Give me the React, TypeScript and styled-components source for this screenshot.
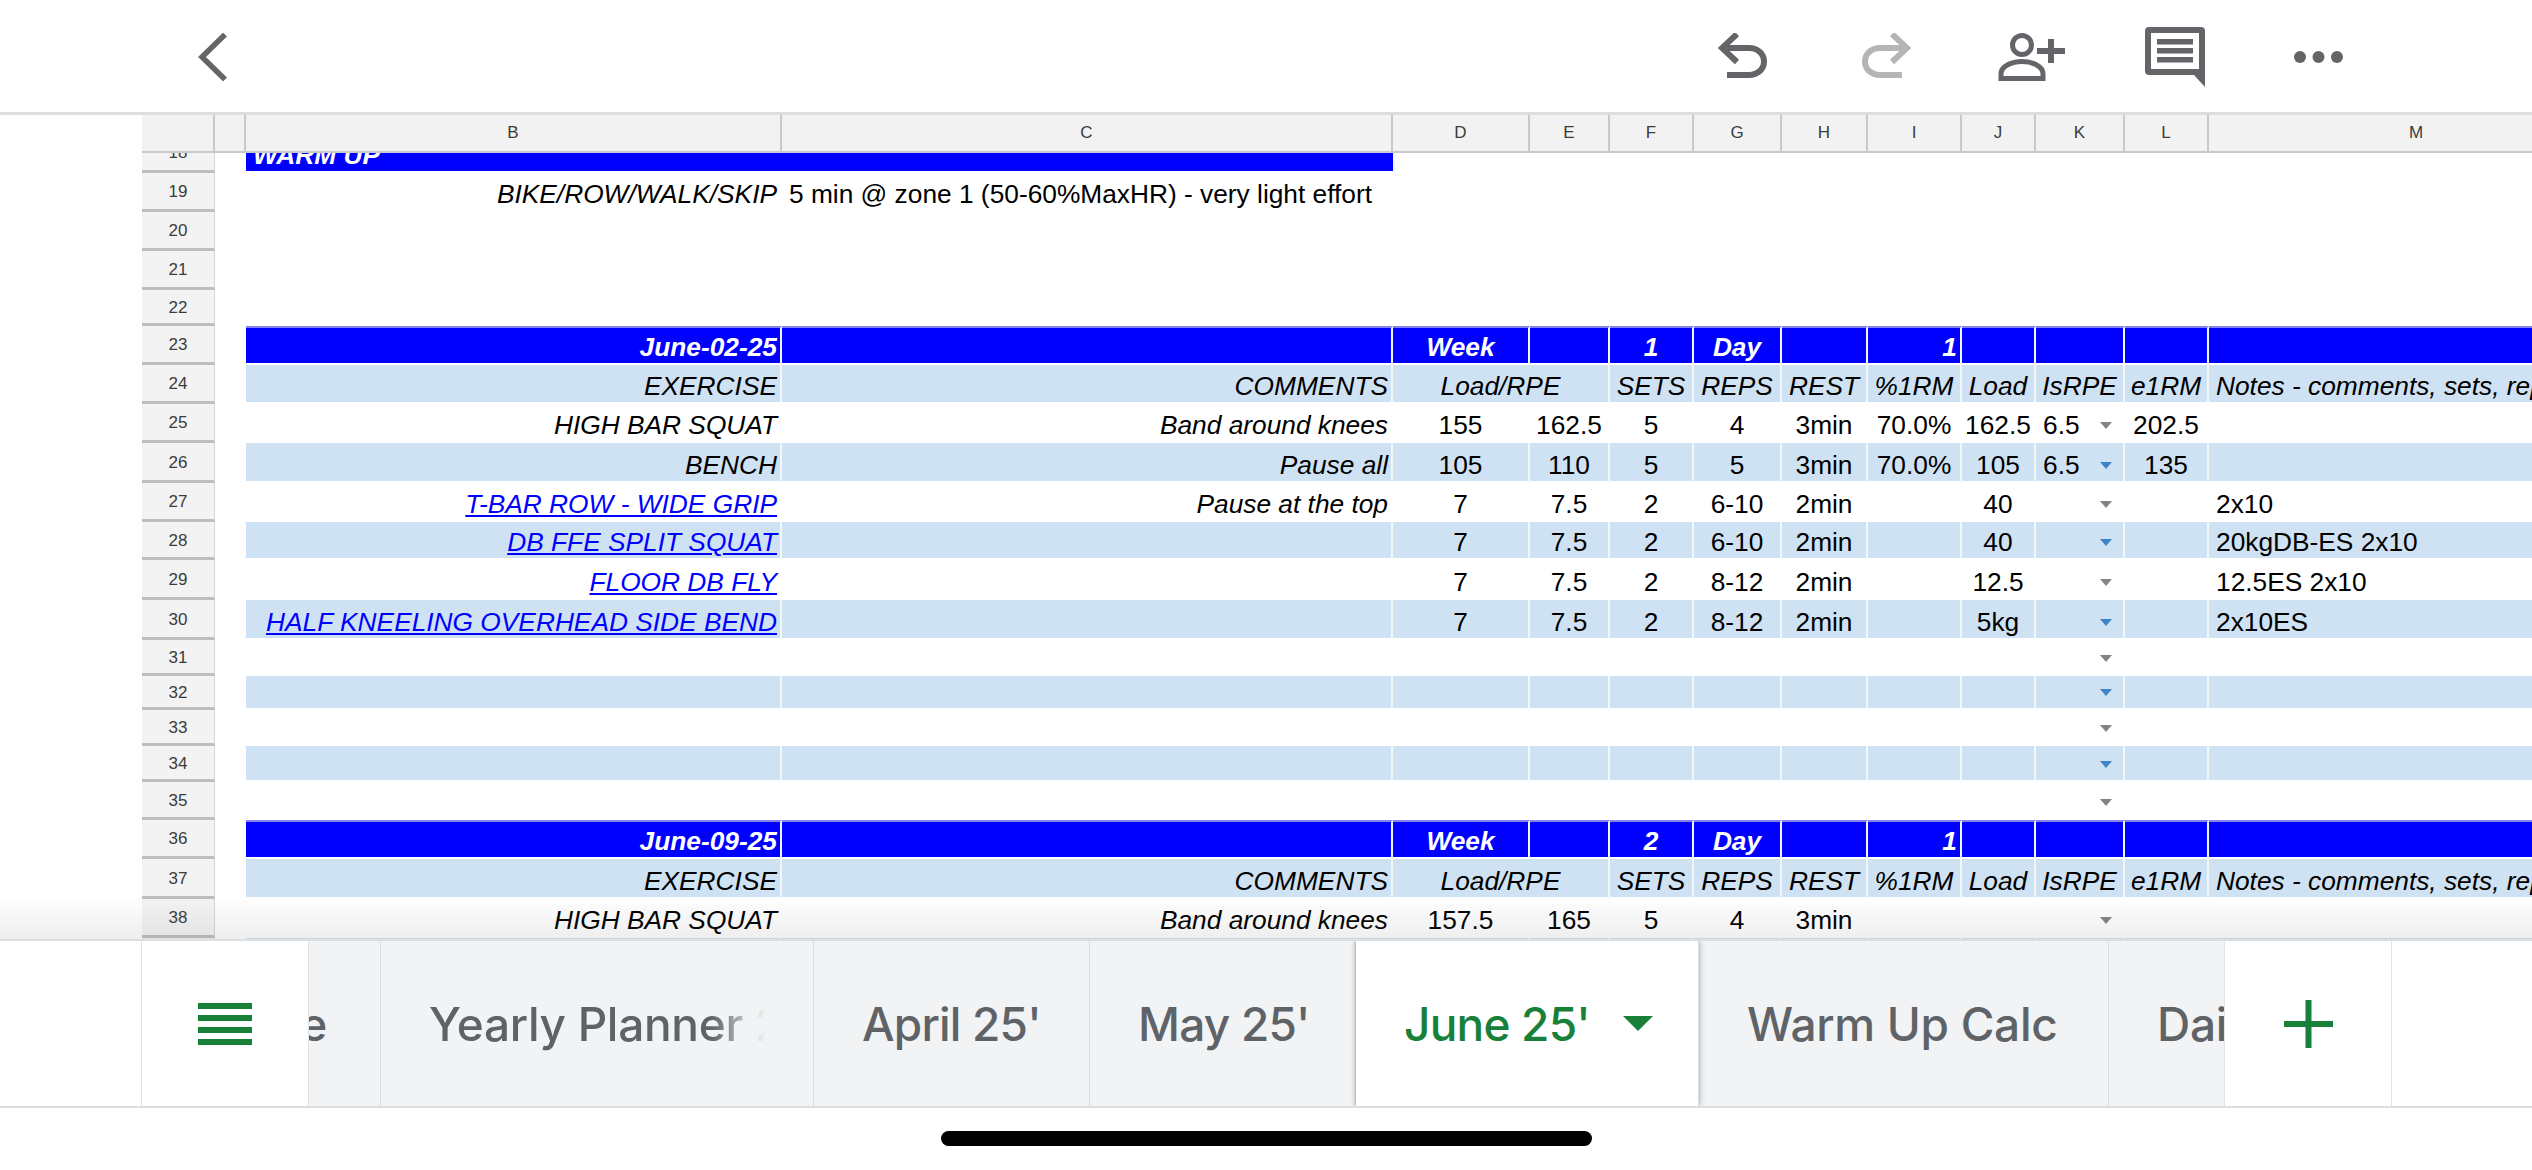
import React from 'react';
import styled, { createGlobalStyle } from 'styled-components';

const GlobalStyle = createGlobalStyle`
  html, body {
    margin: 0;
    padding: 0;
    background: #fff;
    overflow: hidden;
  }
  * { box-sizing: border-box; }
`;

const GREY_ICON = '#636568';
const GREEN = '#188038';

type Tone = 'banner' | 'heading' | 'band' | 'plain';
type Align = 'left' | 'center' | 'right';

const COLUMNS: { id: string; width: number; align: Align }[] = [
  { id: 'B', width: 536, align: 'right' },
  { id: 'C', width: 611, align: 'right' },
  { id: 'D', width: 137, align: 'center' },
  { id: 'E', width: 80, align: 'center' },
  { id: 'F', width: 84, align: 'center' },
  { id: 'G', width: 88, align: 'center' },
  { id: 'H', width: 86, align: 'center' },
  { id: 'I', width: 94, align: 'center' },
  { id: 'J', width: 74, align: 'center' },
  { id: 'K', width: 89, align: 'left' },
  { id: 'L', width: 84, align: 'center' },
  { id: 'M', width: 416, align: 'left' },
];

interface IRow {
  n: number;
  height: number;
  tone: Tone;
  cells?: Record<string, string>;
  aligns?: Record<string, Align>;
  caret?: boolean;
  link?: boolean;
}

const HEADING = {
  B: 'EXERCISE', C: 'COMMENTS', D: 'Load/RPE', F: 'SETS', G: 'REPS', H: 'REST',
  I: '%1RM', J: 'Load', K: 'IsRPE', L: 'e1RM', M: 'Notes - comments, sets, reps',
};

const banner = (n: number, height: number, date: string, week: string): IRow => ({
  n, height, tone: 'banner',
  cells: { B: date, D: 'Week', F: week, G: 'Day', I: '1' },
  aligns: { I: 'right' },
});

const ROWS: IRow[] = [
  { n: 19, height: 39, tone: 'plain', cells: { B: 'BIKE/ROW/WALK/SKIP', C: '5 min @ zone 1 (50-60%MaxHR) - very light effort' }, aligns: { C: 'left' } },
  { n: 20, height: 39, tone: 'plain' },
  { n: 21, height: 39, tone: 'plain' },
  { n: 22, height: 36, tone: 'plain' },
  banner(23, 39, 'June-02-25', '1'),
  { n: 24, height: 39, tone: 'heading', cells: HEADING },
  { n: 25, height: 39, tone: 'plain', caret: true, cells: { B: 'HIGH BAR SQUAT', C: 'Band around knees', D: '155', E: '162.5', F: '5', G: '4', H: '3min', I: '70.0%', J: '162.5', K: '6.5', L: '202.5' } },
  { n: 26, height: 40, tone: 'band', caret: true, cells: { B: 'BENCH', C: 'Pause all', D: '105', E: '110', F: '5', G: '5', H: '3min', I: '70.0%', J: '105', K: '6.5', L: '135' } },
  { n: 27, height: 39, tone: 'plain', caret: true, link: true, cells: { B: 'T-BAR ROW - WIDE GRIP', C: 'Pause at the top', D: '7', E: '7.5', F: '2', G: '6-10', H: '2min', J: '40', M: '2x10' } },
  { n: 28, height: 38, tone: 'band', caret: true, link: true, cells: { B: 'DB FFE SPLIT SQUAT', D: '7', E: '7.5', F: '2', G: '6-10', H: '2min', J: '40', M: '20kgDB-ES 2x10' } },
  { n: 29, height: 40, tone: 'plain', caret: true, link: true, cells: { B: 'FLOOR DB FLY', D: '7', E: '7.5', F: '2', G: '8-12', H: '2min', J: '12.5', M: '12.5ES 2x10' } },
  { n: 30, height: 40, tone: 'band', caret: true, link: true, cells: { B: 'HALF KNEELING OVERHEAD SIDE BEND', D: '7', E: '7.5', F: '2', G: '8-12', H: '2min', J: '5kg', M: '2x10ES' } },
  { n: 31, height: 36, tone: 'plain', caret: true },
  { n: 32, height: 34, tone: 'band', caret: true },
  { n: 33, height: 36, tone: 'plain', caret: true },
  { n: 34, height: 36, tone: 'band', caret: true },
  { n: 35, height: 38, tone: 'plain', caret: true },
  banner(36, 39, 'June-09-25', '2'),
  { n: 37, height: 40, tone: 'heading', cells: HEADING },
  { n: 38, height: 39, tone: 'plain', caret: true, cells: { B: 'HIGH BAR SQUAT', C: 'Band around knees', D: '157.5', E: '165', F: '5', G: '4', H: '3min' } },
  { n: 39, height: 39, tone: 'band' },
];

const Page = styled.div`
  width: 2532px;
  height: 1170px;
  display: flex;
  flex-direction: column;
  overflow: hidden;
  background: #fff;
`;

const TopBar = styled.header`
  height: 115px;
  flex: none;
  display: flex;
  align-items: flex-start;
  padding: 27px 189px 0 198px;
  border-bottom: 3px solid #dcdede;
`;

const BackIcon = styled.svg`
  width: 29px;
  height: 48px;
  margin-top: 6px;
`;

const Actions = styled.div`
  margin-left: auto;
  display: flex;
  align-items: flex-start;
`;

const ActionIcon = styled.svg<{ $gap: number; $top: number }>`
  display: block;
  flex: none;
  margin-left: ${(p) => p.$gap}px;
  margin-top: ${(p) => p.$top}px;
`;

const Sheet = styled.section`
  position: relative;
  height: 824px;
  flex: none;
  padding-left: 142px;
  overflow: hidden;

  &::after {
    content: '';
    position: absolute;
    left: 0;
    right: 0;
    bottom: 0;
    height: 44px;
    background: linear-gradient(rgba(90, 90, 90, 0), rgba(90, 90, 90, 0.1));
    pointer-events: none;
  }
`;

const ColumnHeader = styled.div`
  display: flex;
  width: 2390px;
  height: 38px;
  background: #f2f2f2;
  border-bottom: 2px solid #c9c9c9;
`;

const Corner = styled.div<{ $width: number }>`
  flex: none;
  width: ${(p) => p.$width}px;
  border-right: 2px solid #c9c9c9;
`;

const ColumnLabel = styled.div<{ $width: number }>`
  flex: none;
  width: ${(p) => p.$width}px;
  display: flex;
  align-items: center;
  justify-content: center;
  border-right: 2px solid #c9c9c9;
  font: 17px 'Liberation Sans', Arial, sans-serif;
  color: #3c3c3c;
`;

const Grid = styled.div`
  height: 786px;
  overflow: hidden;
`;

const Rows = styled.div`
  margin-top: -19px;
`;

const Row = styled.div<{ $height: number }>`
  display: flex;
  width: 2390px;
  height: ${(p) => p.$height}px;
`;

const RowNumber = styled.div`
  flex: none;
  width: 73px;
  display: flex;
  align-items: center;
  justify-content: center;
  padding-top: 2px;
  background: #f3f3f3;
  border-bottom: 3px solid #bebebe;
  border-right: 1px solid #d6d6d6;
  font: 17px 'Liberation Sans', Arial, sans-serif;
  color: #3c3c3c;
`;

const Gutter = styled.div`
  flex: none;
  width: 31px;
`;

const TONE_BG: Record<Tone, string> = {
  banner: '#0000ff',
  heading: '#cfe2f3',
  band: '#cfe2f3',
  plain: 'transparent',
};

const JUSTIFY: Record<Align, string> = {
  left: 'flex-start',
  center: 'center',
  right: 'flex-end',
};

const Cell = styled.div<{
  $width: number;
  $tone: Tone;
  $align: Align;
  $italic: boolean;
}>`
  flex: none;
  width: ${(p) => p.$width}px;
  display: flex;
  align-items: flex-end;
  justify-content: ${(p) => JUSTIFY[p.$align]};
  padding: 0 ${(p) => (p.$align === 'right' ? 3 : 0)}px 1px ${(p) => (p.$align === 'left' ? 7 : 0)}px;
  background: ${(p) => TONE_BG[p.$tone]};
  background-clip: padding-box;
  border-right: 2px solid ${(p) => (p.$tone === 'plain' ? 'transparent' : '#f2f7fc')};
  border-bottom: 2px solid ${(p) => (p.$tone === 'plain' ? 'transparent' : '#fff')};
  border-top: ${(p) => (p.$tone === 'banner' ? '2px solid #8383ea' : '0')};
  font: ${(p) => (p.$tone === 'banner' ? 'italic bold' : p.$italic ? 'italic' : 'normal')} 26.3px/30px 'Liberation Sans', Arial, sans-serif;
  color: ${(p) => (p.$tone === 'banner' ? '#fff' : '#000')};
  white-space: nowrap;
  overflow: hidden;
`;

const LinkText = styled.span`
  color: #0000ff;
  text-decoration: underline;
`;

const RowCaret = styled.span<{ $blue: boolean }>`
  width: 0;
  height: 0;
  margin: 0 11px 11px auto;
  border-left: 6px solid transparent;
  border-right: 6px solid transparent;
  border-top: 7px solid ${(p) => (p.$blue ? '#3d85c6' : '#848484')};
`;

const TabBar = styled.nav`
  height: 169px;
  flex: none;
  display: flex;
  padding-left: 141px;
  border-top: 2px solid #dcdee0;
  border-bottom: 2px solid #dcdee0;
`;

const SquareButton = styled.div`
  flex: none;
  width: 168px;
  display: flex;
  align-items: center;
  justify-content: center;
  background: #fff;
  border-left: 1px solid #e1e3e5;
  border-right: 1px solid #e1e3e5;
`;

const Strip = styled.div`
  flex: none;
  width: 1915px;
  display: flex;
  overflow: hidden;
  background: #f1f3f4;
`;

const Tab = styled.div<{ $width?: number; $active?: boolean; $end?: boolean; $tight?: boolean }>`
  flex: none;
  width: ${(p) => (p.$width ? `${p.$width}px` : 'auto')};
  display: flex;
  align-items: center;
  justify-content: ${(p) => (p.$end ? 'flex-end' : 'flex-start')};
  padding: 0 ${(p) => (p.$end ? 53 : 48)}px 0 ${(p) => (p.$end ? 0 : 48)}px;
  overflow: hidden;
  border-right: 1px solid #d9dcde;
  font: 500 46px 'Inter', 'Roboto', sans-serif;
  letter-spacing: ${(p) => (p.$tight ? -0.8 : -0.3)}px;
  white-space: nowrap;
  color: ${(p) => (p.$active ? GREEN : '#5f6368')};
  background: ${(p) => (p.$active ? '#fff' : 'transparent')};
  box-shadow: ${(p) => (p.$active ? '0 0 6px rgba(60, 64, 67, 0.45)' : 'none')};
  z-index: ${(p) => (p.$active ? 1 : 0)};
`;

const FadedLabel = styled.span`
  display: block;
  width: 337px;
  overflow: hidden;
  mask-image: linear-gradient(to right, #000 84%, transparent 100%);
`;

const TabCaret = styled.span`
  flex: none;
  margin-left: 33px;
  width: 0;
  height: 0;
  border-left: 15px solid transparent;
  border-right: 15px solid transparent;
  border-top: 15px solid ${GREEN};
`;

const HomeArea = styled.div`
  flex: 1;
  display: flex;
  justify-content: center;
  padding-top: 23px;
`;

const HomeIndicator = styled.div`
  width: 651px;
  height: 15px;
  margin-left: 1px;
  border-radius: 8px;
  background: #000;
`;

const ArrowIcon = ({ flip, color, gap }: { flip?: boolean; color: string; gap: number }) => (
  <ActionIcon $gap={gap} $top={6} width="49" height="45" viewBox="0 0 49 45" fill="none" stroke={color} strokeWidth="6">
    <g transform={flip ? 'translate(49 0) scale(-1 1)' : undefined}>
      <path d="M19 1 L4 15 L19 29" />
      <path d="M5 15 H31 C40 15 46 21 46 28.5 C46 36 40 42 31 42 H9" />
    </g>
  </ActionIcon>
);

const renderCell = (row: IRow, index: number) => {
  const column = COLUMNS[index];
  const { id } = column;
  const text = row.cells ? row.cells[id] : undefined;
  const align = (row.aligns && row.aligns[id]) || (row.tone === 'heading' && id !== 'B' && id !== 'C' && id !== 'M' ? 'center' : column.align);
  const italic = row.tone === 'heading' || ((id === 'B' || id === 'C') && !(row.aligns && row.aligns[id] === 'left'));
  // the heading rows merge D and E under one Load/RPE label
  if (row.tone === 'heading' && id === 'E') return null;
  const width = row.tone === 'heading' && id === 'D' ? 217 : column.width;
  const isLink = row.link && id === 'B';

  return (
    <Cell key={id} $width={width} $tone={row.tone} $align={align} $italic={italic}>
      {isLink ? <LinkText>{text}</LinkText> : text}
      {id === 'K' && row.caret && <RowCaret $blue={row.tone === 'band'} />}
    </Cell>
  );
};

const App = () => (
  <Page>
    <GlobalStyle />
    <TopBar>
      <BackIcon viewBox="0 0 29 48" fill="none" stroke={GREY_ICON} strokeWidth="5.5">
        <path d="M27 1.5 L4 24 L27 46.5" />
      </BackIcon>
      <Actions>
        <ArrowIcon color={GREY_ICON} gap={0} />
        <ArrowIcon flip color="#b4b5b6" gap={95} />
        <ActionIcon $gap={87} $top={6} width="67" height="48" viewBox="0 0 67 48" fill="none" stroke={GREY_ICON} strokeWidth="5">
          <ellipse cx="24" cy="12" rx="9.5" ry="9.5" />
          <path d="M3 45.5 V41 C3 33 14 28.5 24 28.5 C34 28.5 45 33 45 41 V45.5 Z" />
          <path d="M53 6 V30 M39 18 H67" strokeWidth="6" />
        </ActionIcon>
        <ActionIcon $gap={80} $top={0} width="60" height="60" viewBox="0 0 60 60" fill={GREY_ICON}>
          <path fillRule="evenodd" d="M4 0 H56 a4 4 0 0 1 4 4 V60 L49 48 H4 a4 4 0 0 1 -4 -4 V4 a4 4 0 0 1 4 -4 Z M6 6 V42 H54 V6 Z" />
          <rect x="12" y="12" width="36" height="5.5" />
          <rect x="12" y="21" width="36" height="5.5" />
          <rect x="12" y="30" width="36" height="5.5" />
        </ActionIcon>
        <ActionIcon $gap={89} $top={24} width="49" height="12" viewBox="0 0 49 12" fill={GREY_ICON}>
          <circle cx="6" cy="6" r="6" />
          <circle cx="24.5" cy="6" r="6" />
          <circle cx="43" cy="6" r="6" />
        </ActionIcon>
      </Actions>
    </TopBar>

    <Sheet>
      <ColumnHeader>
        <Corner $width={73} />
        <Corner $width={31} />
        {COLUMNS.map((column) => (
          <ColumnLabel key={column.id} $width={column.width}>{column.id}</ColumnLabel>
        ))}
      </ColumnHeader>
      <Grid>
        <Rows>
          <Row $height={39}>
            <RowNumber>18</RowNumber>
            <Gutter />
            <Cell $width={1149} $tone="banner" $align="left" $italic>WARM UP</Cell>
          </Row>
          {ROWS.map((row) => (
            <Row key={row.n} $height={row.height}>
              <RowNumber>{row.n}</RowNumber>
              <Gutter />
              {COLUMNS.map((_, index) => renderCell(row, index))}
            </Row>
          ))}
        </Rows>
      </Grid>
    </Sheet>

    <TabBar>
      <SquareButton>
        <svg width="54" height="42" viewBox="0 0 54 42" fill={GREEN}>
          <rect y="0" width="54" height="6" />
          <rect y="12" width="54" height="6" />
          <rect y="24" width="54" height="6" />
          <rect y="36" width="54" height="6" />
        </svg>
      </SquareButton>
      <Strip>
        <Tab $width={72} $end>e</Tab>
        <Tab $width={433}><FadedLabel>Yearly Planner 25'</FadedLabel></Tab>
        <Tab $width={276} $tight>April 25'</Tab>
        <Tab $width={266} $tight>May 25'</Tab>
        <Tab $width={343} $active $tight>June 25'<TabCaret /></Tab>
        <Tab $width={410}>Warm Up Calc</Tab>
        <Tab>Daily</Tab>
      </Strip>
      <SquareButton>
        <svg width="49" height="48" viewBox="0 0 49 48" fill={GREEN}>
          <rect x="21.5" width="6" height="48" />
          <rect y="21" width="49" height="6" />
        </svg>
      </SquareButton>
    </TabBar>
    <HomeArea>
      <HomeIndicator />
    </HomeArea>
  </Page>
);

export default App;
